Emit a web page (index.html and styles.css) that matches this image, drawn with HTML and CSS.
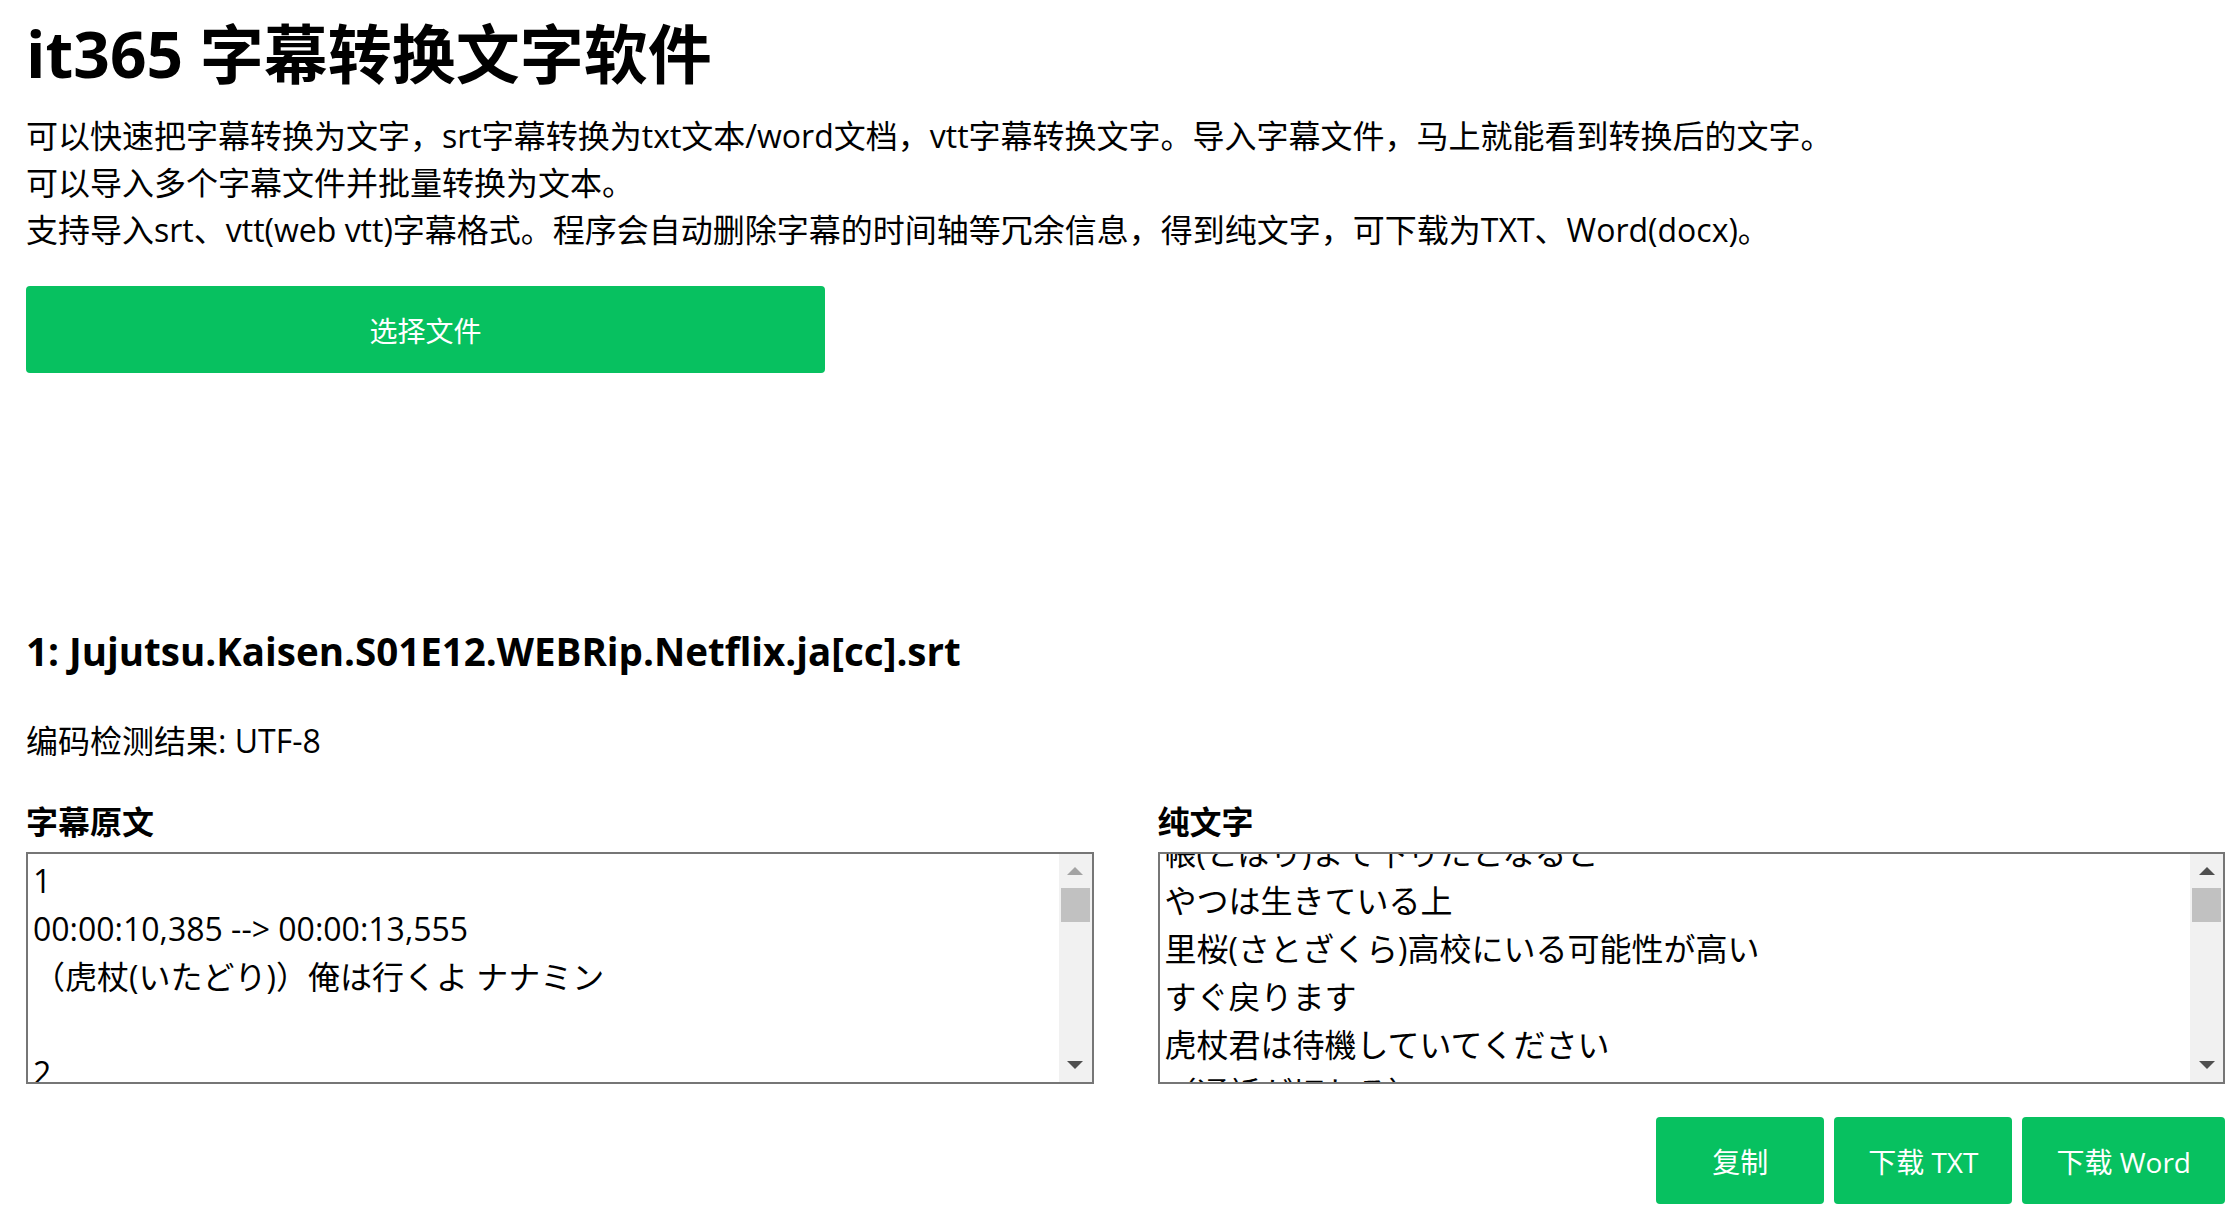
FILE: index.html
```html
<!DOCTYPE html>
<html lang="zh-CN">
<head>
<meta charset="utf-8">
<title>it365 字幕转换文字软件</title>
<link rel="stylesheet" href="styles.css">
</head>
<body>
<main class="page">
  <h1 class="title">it365 字幕转换文字软件</h1>
  <div class="intro">
    <p>可以快速把字幕转换为文字，srt字幕转换为txt文本/word文档，vtt字幕转换文字。导入字幕文件，马上就能看到转换后的文字。</p>
    <p>可以导入多个字幕文件并批量转换为文本。</p>
    <p>支持导入srt、vtt(web vtt)字幕格式。程序会自动删除字幕的时间轴等冗余信息，得到纯文字，可下载为TXT、Word(docx)。</p>
  </div>
  <button class="btn btn-select" type="button">选择文件</button>

  <section class="result">
    <h3 class="file-name">1: Jujutsu.Kaisen.S01E12.WEBRip.Netflix.ja[cc].srt</h3>
    <p class="encoding">编码检测结果: UTF-8</p>
    <div class="panes">
      <div class="pane">
        <h4 class="pane-title">字幕原文</h4>
        <div class="textbox">
          <div class="textbox-view">
<div class="lines">1
00:00:10,385 --> 00:00:13,555
（虎杖(いたどり)）俺は行くよ ナナミン

2
00:00:13,680 --> 00:00:15,306
帳(とばり)まで下りたとなると</div>
          </div>
          <div class="scrollbar">
            <div class="sb-btn sb-up disabled"></div>
            <div class="sb-track"><div class="sb-thumb"></div></div>
            <div class="sb-btn sb-down"></div>
          </div>
        </div>
      </div>
      <div class="pane">
        <h4 class="pane-title">纯文字</h4>
        <div class="textbox">
          <div class="textbox-view">
<div class="lines scrolled">帳(とばり)まで下りたとなると
やつは生きている上
里桜(さとざくら)高校にいる可能性が高い
すぐ戻ります
虎杖君は待機していてください
（通話が切れる）</div>
          </div>
          <div class="scrollbar">
            <div class="sb-btn sb-up"></div>
            <div class="sb-track"><div class="sb-thumb"></div></div>
            <div class="sb-btn sb-down"></div>
          </div>
        </div>
      </div>
    </div>
    <div class="actions">
      <button class="btn btn-action btn-copy" type="button">复制</button>
      <button class="btn btn-action" type="button">下载 TXT</button>
      <button class="btn btn-action" type="button">下载 Word</button>
    </div>
  </section>
</main>
</body>
</html>
```

FILE: styles.css
```css
html, body {
  margin: 0;
  padding: 0;
  background: #fff;
}

body {
  font-family: "Open Sans", "Noto Sans CJK SC", sans-serif;
  font-size: 32px;
  line-height: 47px;
  color: #000;
}

.page {
  padding: 0 10px 0 26px;
}

.title {
  margin: 15px 0 0;
  font-size: 64px;
  line-height: 77px;
  font-weight: 700;
}

.intro {
  margin-top: 20px;
}

.intro p {
  margin: 0;
}

.btn {
  font-family: "Open Sans", "Noto Sans CJK SC", sans-serif;
  border: none;
  background: #07c160;
  color: #fff;
  font-size: 28px;
  border-radius: 4px;
  cursor: pointer;
}

.btn-select {
  display: block;
  margin-top: 33px;
  width: 799px;
  height: 87px;
}

.result {
  margin-top: 256px;
}

.file-name {
  margin: 0;
  font-size: 38.5px;
  line-height: 44px;
  font-weight: 700;
}

.encoding {
  margin: 44px 0 0;
}

.panes {
  display: grid;
  grid-template-columns: 1fr 1fr;
  column-gap: 64px;
  margin-top: 34px;
}

.pane-title {
  margin: 0 0 7px;
  font-size: 32px;
  line-height: 47px;
  font-weight: 700;
}

.textbox {
  display: flex;
  height: 232px;
  box-sizing: border-box;
  border: 2px solid #767676;
  background: #fff;
}

.textbox-view {
  flex: 1;
  overflow: hidden;
  padding: 3px 6px 0 5px;
}

.lines {
  white-space: pre;
  font-size: 32px;
  line-height: 48px;
}

.lines.scrolled {
  margin-top: -28px;
}

.scrollbar {
  width: 33px;
  display: flex;
  flex-direction: column;
  background: #f1f1f1;
}

.sb-btn {
  height: 34px;
  display: flex;
  align-items: center;
  justify-content: center;
}

.sb-up::before,
.sb-down::before {
  content: "";
  width: 0;
  height: 0;
  border-left: 8px solid transparent;
  border-right: 8px solid transparent;
}

.sb-up::before {
  border-bottom: 8px solid #505050;
}

.sb-down::before {
  border-top: 8px solid #505050;
}

.sb-up.disabled::before {
  border-bottom-color: #a3a3a3;
}

.sb-track {
  flex: 1;
}

.sb-thumb {
  height: 34px;
  margin: 0 2px;
  background: #c1c1c1;
}

.actions {
  display: flex;
  justify-content: flex-end;
  gap: 10px;
  margin-top: 33px;
}

.btn-action {
  height: 87px;
  min-width: 168px;
  padding: 0 34px;
}
```
